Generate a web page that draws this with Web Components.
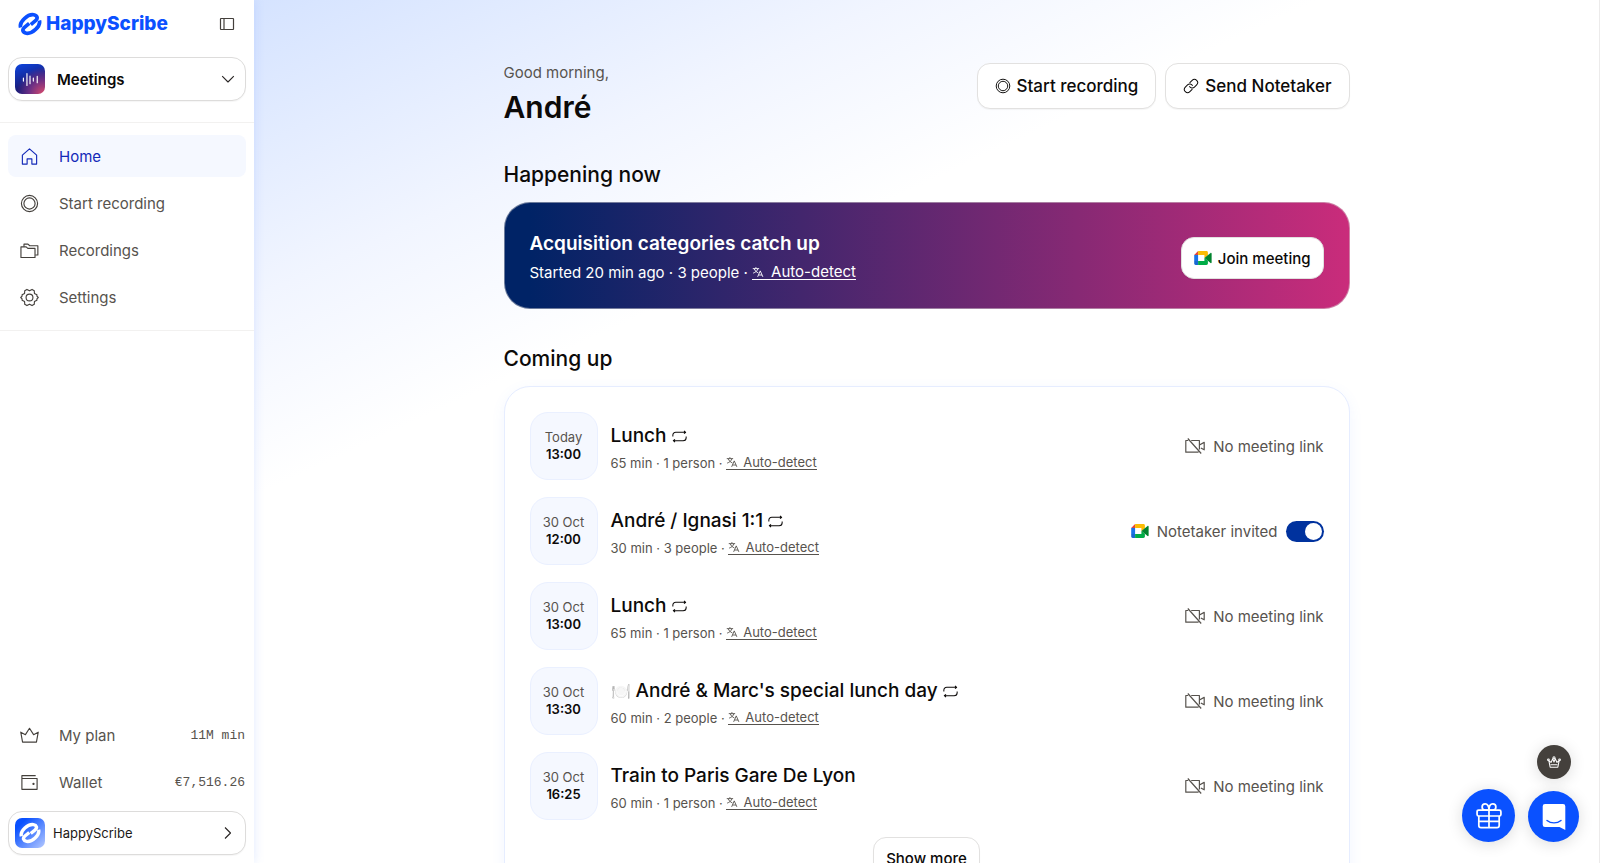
<!DOCTYPE html>
<html lang="en">
<head>
<meta charset="utf-8">
<meta name="viewport" content="width=device-width, initial-scale=1">
<title>Meetings – HappyScribe</title>
<style>
  html, body { height: 100%; }
  body { margin: 0; font-family: Inter, "Liberation Sans", sans-serif; font-size: 15px; color: #0c0a09; background: #fff; overflow: hidden; }
</style>
</head>
<body>
<hs-app></hs-app>

<script>
const ICONS = {
  mark: ['0 0 24 24', '<g stroke-width="3.700"><path d="M2.600 15.600C1.600 12 3.600 9.200 6.400 6.600c3-2.800 6.300-4.300 9.300-3.800 3.600.6 4.600 3.500 1.800 5.900L12.800 12.600"/><path d="M21.400 8.400c1 3.600-1 6.400-3.800 9-3 2.800-6.300 4.300-9.300 3.800-3.600-.6-4.600-3.500-1.800-5.900L11.200 11.400"/></g>'],
  panel: ['0 0 16 16', '<rect x="1.500" y="2.500" width="13" height="11" rx=".5"/><path d="M5 2.500v11"/>'],
  down: ['0 0 16 16', '<path d="M2.200 5.200 8 11l5.800-5.800"/>'],
  right: ['0 0 16 16', '<path d="M5 2.500 10.500 8 5 13.500"/>'],
  home: ['0 0 20 20', '<path d="M2.500 8.500 10 2l7.500 6.500V18h-5v-5.500h-5V18h-5z"/>'],
  record: ['0 0 20 20', '<circle cx="10" cy="10" r="8.500"/><circle cx="10" cy="10" r="5.900"/>'],
  folder: ['0 0 20 20', '<path d="M1 6.200h5.500l1.700 1.600h7.600v9.600H1z"/><path d="M4.200 6V3.300h4.200l1.800 1.700h8.600v9.700h-2.800"/>'],
  gear: ['0 0 20 20', '<circle cx="10" cy="10" r="3.600"/><path d="M7.300 1.500 10 3l2.700-1.500 2.300 1.300.2 2.900 2.600 1.500V8.500L19.200 10l-1.400 1.500v1.300l-2.600 1.500-.2 2.900-2.300 1.300L10 17l-2.700 1.500L5 17.200l-.2-2.900-2.600-1.500v-1.300L.8 10l1.400-1.500V7.200l2.600-1.500L5 2.800z"/>'],
  crown: ['0 0 20 20', '<path d="m.8 6.500 4.900 2.600L10 2.400l4.300 6.700 4.900-2.600-1.900 10.400H2.700z"/>'],
  wallet: ['0 0 20 20', '<path d="M16.500 2.800H2v14.400h16V5.800H2"/><circle cx="14.200" cy="11.500" r=".6" fill="currentColor"/>'],
  link: ['0 0 16 16', '<g transform="rotate(-45 8 8)"><path d="M6.800 11.200H3.200a3.200 3.200 0 0 1 0-6.400h3.100a3.200 3.200 0 0 1 3 4.200"/><path d="M9.200 4.800h3.600a3.200 3.200 0 0 1 0 6.400H9.700a3.200 3.200 0 0 1-3-4.200"/></g>'],
  translate: ['0 0 16 16', '<path d="M1 3.500h8.500M5.200 1.500v2M8 3.500C7 6.500 4.500 8.500 1.500 9.500M2.800 3.500C4 6.300 6 8.200 8.500 9.200M7.500 14.500l3.500-8 3.500 8M8.600 12h4.800"/>'],
  repeat: ['0 0 16 16', '<path d="M.9 8V6.700c0-2 1.200-3.200 3.200-3.200h10.400M12.800 2l1.800 1.500L12.800 5M15.100 8v1.300c0 2-1.200 3.200-3.200 3.200H1.500M3.200 11l-1.800 1.500L3.200 14"/>'],
  nocam: ['0 0 20 16', '<path d="M3.200 2.500H.8v11.700h12.800M6.200 2.500h8.200v9M14.400 7l4.800-2.600v7.400l-3.400-1.900M2.800.5l13.400 15"/>'],
  meet: ['0 0 18 14', '<g stroke="none"><path fill="#ea4335" d="M.2 3.900 4.100 0v3.900z"/><path fill="#fbbc04" d="M4.100 0h8.300c.9 0 1.500.6 1.500 1.400v3L10.400 7V3.900H4.100z"/><path fill="#1a73e8" d="M.2 3.900h3.900v6.200H.2z"/><path fill="#1967d2" d="M.2 10.100h3.900V14H1.600c-.8 0-1.400-.6-1.400-1.400z"/><path fill="#00ac47" d="M4.100 10.100h6.300V7l3.500 2.700v2.900c0 .8-.6 1.400-1.500 1.400H4.100z"/><path fill="#00832d" d="M10.400 7 16.600 1.900c.4-.3 1 0 1 .5v9.200c0 .5-.6.800-1 .5z"/></g>'],
  gift: ['0 0 24 24', '<rect x="1" y="6.500" width="22" height="5.500" rx="1.500"/><path d="M2.600 12v8.800c0 1.200.8 2 2 2h14.800c1.200 0 2-.8 2-2V12M12 6.500v16.300M2.600 17h18.800M12 6.500C12 2.800 10.500.8 8.500.8a2.800 2.800 0 0 0 0 5.700zM12 6.500c0-3.700 1.500-5.700 3.500-5.700a2.800 2.800 0 0 1 0 5.700z"/>'],
  chat: ['0 0 24 28', '<path fill="currentColor" stroke="none" d="M3 1h18a2.300 2.300 0 0 1 2.300 2.300V27L17.500 24H3A2.300 2.300 0 0 1 .7 21.700V3.300A2.300 2.300 0 0 1 3 1z"/><path stroke="#0a51ff" stroke-linecap="round" d="M5 17.500c4 3.200 10 3.200 14 0"/>'],
  royal: ['0 0 16 14', '<path d="M2 5.500 3.500 13h9L14 5.500l-2.500 2-2-4.300L8 7 6.500 3.200l-2 4.300zM4 10.300h8"/><circle cx="1.500" cy="4.500" r="1"/><circle cx="14.500" cy="4.500" r="1"/><circle cx="8" cy="2" r="1.200"/>'],
  wave: ['0 0 24 24', '<path stroke-linecap="round" d="M2 9.800v4.400M7 3.500v17M11.300 7v11M16 9.800v4.400M21.500 7.500v9"/>']
};

function define(name, html, setup) {
  const template = document.createElement('template');
  template.innerHTML = html;
  customElements.define(name, class extends HTMLElement {
    constructor() {
      super();
      this.attachShadow({ mode: 'open' }).append(template.content.cloneNode(true));
    }
    connectedCallback() { if (setup) setup(this, this.shadowRoot); }
  });
}

/* <hs-icon name size weight> draws one glyph; size is the width in pixels. */
define('hs-icon', `
  <style>
    :host { display: inline-flex; flex: none; }
    svg { display: block; fill: none; stroke: currentColor; stroke-linejoin: round; }
  </style>`, (el, root) => {
  const [box, body] = ICONS[el.getAttribute('name')];
  const [, , w, h] = box.split(' ').map(Number);
  const size = Number(el.getAttribute('size') || 20);
  const stroke = el.getAttribute('weight') || 1.2;
  const holder = document.createElement('span');
  holder.innerHTML = `<svg viewBox="${box}" width="${size}" height="${Math.round(size * h / w)}" stroke-width="${stroke}" aria-hidden="true">${body}</svg>`;
  root.append(holder.firstChild);
});

define('hs-brand', `
  <style>
    :host { display: flex; align-items: center; justify-content: space-between; height: 48px; padding: 0 19px 0 18px; }
    a { display: flex; align-items: center; gap: 4px; color: #0b50ff; text-decoration: none; font-size: 19px; line-height: 24px; font-weight: 800; }
    button { display: flex; padding: 0; border: 0; background: none; color: #44403c; }
  </style>
  <a href="#"><hs-icon name="mark" size="24"></hs-icon><span>HappyScribe</span></a>
  <button type="button" aria-label="Collapse sidebar"><hs-icon name="panel" size="16"></hs-icon></button>`);

/* Rounded picker with a coloured tile, a label and a chevron. */
define('hs-picker', `
  <style>
    :host { display: block; padding: 0 8px; font-size: 15px; font-weight: 600; --gap: 12px; }
    :host([compact]) { font-size: 13px; font-weight: 400; color: #1c1917; --gap: 8px; }
    button { box-sizing: border-box; width: 100%; height: 44px; display: flex; align-items: center; gap: var(--gap); padding: 0 9px 0 6px; border: 1px solid #dddcdb; border-radius: 14px; background: #fff; font: inherit; color: inherit; text-align: left; box-shadow: 0 1px 1px #0000000a; }
    .tile { width: 30px; height: 30px; border-radius: 7px; display: flex; align-items: center; justify-content: center; color: #fff; background: radial-gradient(circle at 95% 100%, #d84a6c 0, #6b2f85 35%, transparent 65%), linear-gradient(160deg, #0c45e0, #1a1c78 65%); }
    :host([compact]) .tile { background: linear-gradient(135deg, #0a51ff 20%, #b5c9ff); }
    .label { flex: 1; }
    .arrow { display: flex; color: #292524; }
  </style>
  <button type="button"><span class="tile"></span><span class="label"><slot></slot></span><span class="arrow"></span></button>`,
  (el, root) => {
    const compact = el.hasAttribute('compact');
    root.querySelector('.tile').innerHTML = compact ? '<hs-icon name="mark" size="22"></hs-icon>' : '<hs-icon name="wave" size="17" weight="1.6"></hs-icon>';
    root.querySelector('.arrow').innerHTML = `<hs-icon name="${compact ? 'right' : 'down'}" size="16" weight="1.1"></hs-icon>`;
  });

define('hs-nav-item', `
  <style>
    :host { display: block; color: #57534e; }
    a { display: flex; align-items: center; height: 42px; padding: 0 1px 0 12px; border-radius: 8px; color: inherit; text-decoration: none; }
    :host([current]) a { background: #f5f8ff; color: #1329b8; }
    .icon { display: flex; width: 39px; color: #44403c; }
    :host([current]) .icon { color: inherit; }
    .label { flex: 1; }
    ::slotted([slot=value]) { font: 13px/20px "Liberation Mono", monospace; padding-top: 2px; }
  </style>
  <a href="#"><span class="icon"></span><span class="label"><slot></slot></span><slot name="value"></slot></a>`,
  (el, root) => { root.querySelector('.icon').innerHTML = `<hs-icon name="${el.getAttribute('icon')}" size="19"></hs-icon>`; });

define('hs-sidebar', `
  <style>
    :host { position: relative; z-index: 1; display: flex; flex-direction: column; width: 254px; flex: none; background: #fff; box-shadow: 0 0 10px #5b8cff2e; }
    nav { display: flex; flex-direction: column; gap: 5px; padding: 12px 8px; border: solid #f2f1f0; border-width: 1px 0; margin-top: 21px; }
    .account { margin-top: auto; border: 0; padding: 0 8px; }
    .top { padding-top: 9px; }
    .bottom { padding: 8px 0; }
  </style>
  <hs-brand></hs-brand>
  <div class="top"><hs-picker>Meetings</hs-picker></div>
  <nav aria-label="Main">
    <hs-nav-item icon="home" current>Home</hs-nav-item>
    <hs-nav-item icon="record">Start recording</hs-nav-item>
    <hs-nav-item icon="folder">Recordings</hs-nav-item>
    <hs-nav-item icon="gear">Settings</hs-nav-item>
  </nav>
  <nav class="account" aria-label="Account">
    <hs-nav-item icon="crown">My plan<span slot="value">11M min</span></hs-nav-item>
    <hs-nav-item icon="wallet">Wallet<span slot="value">€7,516.26</span></hs-nav-item>
  </nav>
  <div class="bottom"><hs-picker compact>HappyScribe</hs-picker></div>`);

define('hs-button', `
  <style>
    :host { display: block; --h: 42px; --pad: 12px; font-size: 15px; font-weight: 500; }
    :host([large]) { --h: 46px; --pad: 17px; font-size: 17px; }
    button { height: var(--h); display: flex; align-items: center; gap: 6px; padding: 0 var(--pad); border: 1px solid #e2e1e0; border-radius: 13px; background: #fff; font: inherit; color: #0c0a09; white-space: nowrap; box-shadow: 0 1px 1px #0000000a; }
  </style>
  <button type="button"><slot name="icon"></slot><slot></slot></button>`);

define('hs-greeting', `
  <style>
    :host { display: flex; justify-content: space-between; align-items: flex-start; }
    p { margin: 0; line-height: 20px; color: #57534e; }
    h1 { margin: 4px 0 0; font-size: 30px; line-height: 40px; font-weight: 600; }
    .actions { display: flex; gap: 9px; }
  </style>
  <div><p>Good morning,</p><h1>André</h1></div>
  <div class="actions">
    <hs-button large><hs-icon slot="icon" name="record" size="16"></hs-icon>Start recording</hs-button>
    <hs-button large><hs-icon slot="icon" name="link" size="16" weight="1"></hs-icon>Send Notetaker</hs-button>
  </div>`);

define('hs-language', `
  <style>
    :host { display: inline; --gap: 5px; }
    a { display: inline-flex; align-items: center; gap: var(--gap); color: inherit; text-decoration: none; border-bottom: 1px solid; line-height: 14px; }
  </style>
  <a href="#"><hs-icon name="translate" size="12"></hs-icon>Auto-detect</a>`);

define('hs-live-card', `
  <style>
    :host { box-sizing: border-box; display: flex; align-items: center; justify-content: space-between; height: 107px; padding: 5px 25px 0; border: 1px solid #d6d3d180; border-radius: 26px; background: linear-gradient(90deg, #002366 3%, #ca2c7b) border-box; color: #fff; }
    h3 { margin: 0; font-size: 19px; line-height: 28px; font-weight: 600; }
    p { margin: 0; line-height: 30px; }
    .text { padding-top: 2px; }
    hs-language { --gap: 7px; }
  </style>
  <div class="text"><h3><slot></slot></h3><p>Started 20 min ago · 3 people · <hs-language></hs-language></p></div>
  <hs-button><hs-icon slot="icon" name="meet" size="18"></hs-icon>Join meeting</hs-button>`);

define('hs-meeting', `
  <style>
    :host { display: flex; align-items: center; gap: 13px; height: 68px; }
    time { box-sizing: border-box; flex: none; width: 68px; height: 68px; display: flex; flex-direction: column; justify-content: center; border: 1px solid #eaf0ff; border-radius: 18px; background: #f5f8ff; text-align: center; font-size: 13px; line-height: 17px; color: #57534e; }
    time b { font-weight: 600; color: #0c0a09; }
    .body { flex: 1; align-self: flex-start; padding-top: 9px; }
    h3 { display: flex; align-items: center; gap: 5px; margin: 0; font-size: 19px; line-height: 30px; font-weight: 500; }
    ::slotted(.emoji) { font-size: 16px; }
    p { margin: 0; font-size: 13px; line-height: 24px; color: #57534e; }
    .status, label { display: flex; align-items: center; gap: 8px; color: #57534e; }
    input { appearance: none; margin: 0; width: 38px; height: 21px; padding: 2px; box-sizing: border-box; border-radius: 11px; background: #00329e; display: flex; justify-content: flex-end; }
    input::before { content: ""; width: 17px; height: 17px; border-radius: 50%; background: #fff; }
  </style>
  <time><span class="day"></span><b class="hour"></b></time>
  <div class="body"><h3><span><slot></slot></span></h3><p><span class="facts"></span> <hs-language></hs-language></p></div>
  <div class="status"></div>`,
  (el, root) => {
    root.querySelector('.day').textContent = el.getAttribute('day');
    root.querySelector('.hour').textContent = el.getAttribute('hour');
    root.querySelector('.facts').textContent = el.getAttribute('facts') + ' ·';
    if (el.hasAttribute('repeats')) root.querySelector('h3').insertAdjacentHTML('beforeend', '<hs-icon name="repeat" size="15" weight="1.1"></hs-icon>');
    root.querySelector('.status').innerHTML = el.hasAttribute('invited')
      ? '<hs-icon name="meet" size="18"></hs-icon><label>Notetaker invited<input type="checkbox" role="switch" checked></label>'
      : '<hs-icon name="nocam" size="20"></hs-icon><span>No meeting link</span>';
  });

define('hs-main', `
  <style>
    :host { display: block; flex: 1; min-width: 0; overflow-y: auto; scrollbar-width: none; background: linear-gradient(155deg, #d5e3ff 0, #f1f5ff 270px, #fff 450px); border-right: 1px solid #ecebeb; }
    main { box-sizing: border-box; max-width: 886px; margin: 0 auto; padding: 63px 20px 40px; }
    h2 { margin: 34px 0 13px; font-size: 21px; line-height: 28px; font-weight: 500; }
    hs-live-card + h2 { margin-top: 36px; }
    .list { display: flex; flex-direction: column; gap: 17px; padding: 25px; border: 1px solid #e6edff; border-radius: 26px; background: #fff; box-shadow: 0 4px 14px #5b8cff14; }
    .list hs-button { align-self: center; }
  </style>
  <main>
    <hs-greeting></hs-greeting>
    <h2>Happening now</h2>
    <hs-live-card>Acquisition categories catch up</hs-live-card>
    <h2>Coming up</h2>
    <section class="list">
      <hs-meeting day="Today" hour="13:00" facts="65 min · 1 person" repeats>Lunch</hs-meeting>
      <hs-meeting day="30 Oct" hour="12:00" facts="30 min · 3 people" repeats invited>André / Ignasi 1:1</hs-meeting>
      <hs-meeting day="30 Oct" hour="13:00" facts="65 min · 1 person" repeats>Lunch</hs-meeting>
      <hs-meeting day="30 Oct" hour="13:30" facts="60 min · 2 people" repeats><span class="emoji">🍽️</span> André &amp; Marc's special lunch day</hs-meeting>
      <hs-meeting day="30 Oct" hour="16:25" facts="60 min · 1 person">Train to Paris Gare De Lyon</hs-meeting>
      <hs-button>Show more</hs-button>
    </section>
  </main>`);

define('hs-floating', `
  <style>
    :host { position: fixed; right: 21px; bottom: 21px; z-index: 2; display: flex; align-items: flex-end; gap: 13px; }
    div { display: flex; flex-direction: column; align-items: center; gap: 12px; }
    button { display: flex; align-items: center; justify-content: center; width: 51px; height: 51px; padding: 0; border: 0; border-radius: 50%; background: #0a51ff; color: #fff; box-shadow: 0 2px 16px #00000024; }
    .gift { width: 53px; height: 53px; }
    .crown { width: 34px; height: 34px; background: #44403c; }
  </style>
  <button type="button" class="gift" aria-label="Rewards"><hs-icon name="gift" size="26" weight="1.6"></hs-icon></button>
  <div>
    <button type="button" class="crown" aria-label="Upgrade"><hs-icon name="royal" size="14" weight="1.2"></hs-icon></button>
    <button type="button" aria-label="Chat"><hs-icon name="chat" size="24" weight="1.4"></hs-icon></button>
  </div>`);

define('hs-app', `
  <style>:host { display: flex; height: 100vh; }</style>
  <hs-sidebar></hs-sidebar>
  <hs-main></hs-main>
  <hs-floating></hs-floating>`);
</script>
</body>
</html>
